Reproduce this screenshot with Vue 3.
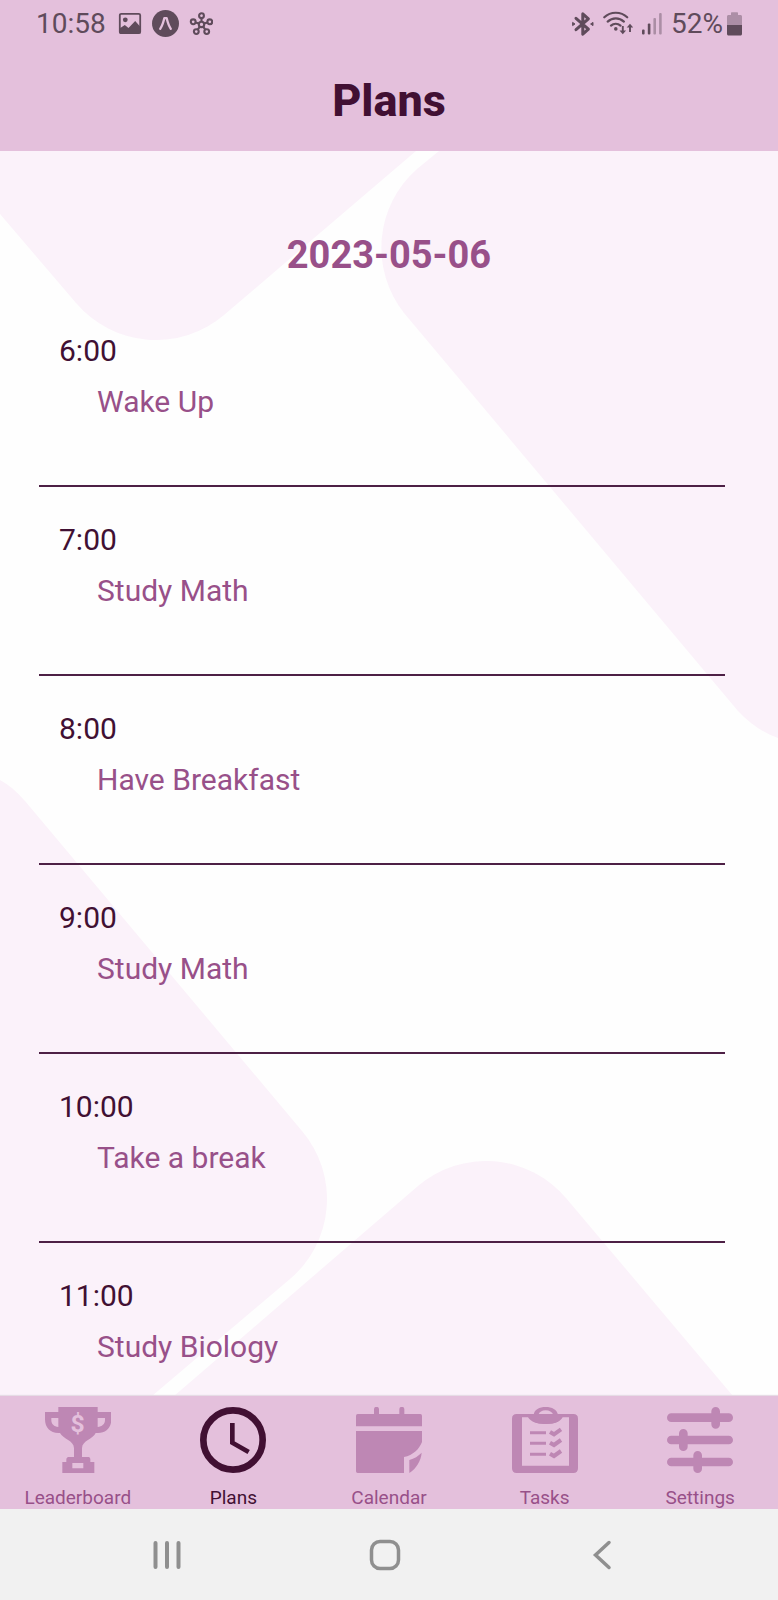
<script setup>
import { ref } from 'vue'

const plans = [
  { time: '6:00', title: 'Wake Up' },
  { time: '7:00', title: 'Study Math' },
  { time: '8:00', title: 'Have Breakfast' },
  { time: '9:00', title: 'Study Math' },
  { time: '10:00', title: 'Take a break' },
  { time: '11:00', title: 'Study Biology' },
]

const tabs = ['Leaderboard', 'Plans', 'Calendar', 'Tasks', 'Settings']
const active = ref('Plans')
</script>

<template>
  <div class="screen">
    <header class="top">
      <div class="status">
        <div class="status-side">
          <span class="clock">10:58</span>
          <svg width="24" height="24" viewBox="0 0 24 24" aria-hidden="true">
            <rect x="1.8" y="1.8" width="20.4" height="19.4" rx="1.5" fill="none" stroke="currentColor" stroke-width="1.8" />
            <circle cx="7.3" cy="7.8" r="2.4" fill="currentColor" />
            <path d="M1.5 16.5l5.3-3.5 3.7 3L17.2 9l5.3 6v6.5h-21z" fill="currentColor" />
          </svg>
          <svg width="27" height="27" viewBox="0 0 27 27" aria-hidden="true">
            <circle cx="13.5" cy="13.5" r="13.5" fill="currentColor" />
            <path d="M8.2 18.8C10.4 15.6 11.3 12.4 12.3 8.2h2.4c1 4.2 1.9 7.4 4.1 10.6" fill="none" stroke="#e4c0dc" stroke-width="2.3" stroke-linecap="round" stroke-linejoin="round" />
          </svg>
          <svg width="24" height="24" viewBox="0 0 24 24" fill="none" stroke="currentColor" stroke-width="2.1" aria-hidden="true">
            <circle cx="12.5" cy="12.4" r="2.7" />
            <circle cx="12.5" cy="3.7" r="2.4" />
            <circle cx="4.2" cy="9.8" r="2.4" />
            <circle cx="20.8" cy="9.8" r="2.4" />
            <circle cx="7.3" cy="19.6" r="2.4" />
            <circle cx="17.7" cy="19.6" r="2.4" />
            <path d="M12.5 6v3.7M6.5 10.5l3.4 1.1M18.5 10.5l-3.4 1.1M8.7 17.6l2.2-3M16.3 17.6l-2.2-3" />
          </svg>
        </div>
        <div class="status-side right">
          <svg width="22" height="26" viewBox="0 0 22 26" fill="none" stroke="currentColor" aria-hidden="true">
            <path d="M4 7.3l12.400 10.9-5.600 5V2.8l5.600 5L4 18.7" stroke-width="3" stroke-linejoin="round" stroke-linecap="round" />
            <path d="M.6 11.4l2.400 1.600-2.400 1.600zM21 11.4L18.6 13l2.400 1.600z" stroke-width="1" fill="currentColor" />
          </svg>
          <svg width="30" height="26" viewBox="0 0 30 26" fill="none" stroke="currentColor" aria-hidden="true">
            <path d="M1.300 6.300C7.500.2 18 .2 24.200 6.300M4.700 10.600c4.600-4.300 11.600-4.300 16.200 0M8 14.600c2.700-2.500 6.800-2.500 9.500 0" stroke-width="2.200" stroke-linecap="round" />
            <circle cx="12.8" cy="17.9" r="1.8" fill="currentColor" stroke="none" />
            <path d="M19.800 15v6M27 21v-6" stroke-width="1.900" />
            <path d="M16.500 19.500h6.600l-3.300 3.800zM23.700 16.500h6.600L27 12.700z" fill="currentColor" stroke="none" />
          </svg>
          <svg width="20" height="26" viewBox="0 0 20 26" fill="currentColor" aria-hidden="true">
            <rect x="0" y="18.5" width="2.6" height="5" rx="1" />
            <rect x="5.8" y="12.6" width="2.6" height="10.9" rx="1" />
            <g opacity=".42">
              <rect x="11.4" y="7" width="2.6" height="16.5" rx="1" />
              <rect x="17.1" y="2" width="2.6" height="21.5" rx="1" />
            </g>
          </svg>
          <span class="battery">
            <span>52%</span>
            <svg width="15" height="26" viewBox="0 0 15 26" fill="currentColor" aria-hidden="true">
              <path d="M4 4V2.200c0-.6.4-1 1-1h5c.6 0 1 .4 1 1V4h2.500c.8 0 1.500.7 1.500 1.500V14H0V5.500C0 4.700.7 4 1.500 4z" opacity=".42" />
              <path d="M0 14h15v9c0 .8-.7 1.500-1.500 1.500h-12C.7 24.500 0 23.800 0 23z" />
            </svg>
          </span>
        </div>
      </div>
      <h1>Plans</h1>
    </header>

    <main class="content">
      <svg class="backdrop" viewBox="0 151 778 1245" preserveAspectRatio="none" aria-hidden="true">
        <g fill="#fbf2fa">
          <path d="M0 151V214L76 303A105 105 0 0 0 224 315L416 151z" />
          <path d="M439 151L417 169A105 105 0 0 0 404 313L738 711Q757 731 778 738V151z" />
          <path d="M0 780Q13 787 25 801L302 1131A105 105 0 0 1 290 1279L152 1396H0z" />
          <path d="M174 1396L418 1186A105 105 0 0 1 566 1198L733 1396z" />
        </g>
      </svg>
      <h2>2023-05-06</h2>
      <ul class="plans">
        <li v-for="plan in plans" :key="plan.time">
          <time>{{ plan.time }}</time>
          <p>{{ plan.title }}</p>
        </li>
      </ul>
    </main>

    <nav class="tabs" aria-label="Main">
      <button v-for="tab in tabs" :key="tab" type="button" :class="{ active: tab === active }" @click="active = tab">
        <svg width="66" height="66" viewBox="0 0 198 198" fill="currentColor" aria-hidden="true">
          <template v-if="tab === 'Leaderboard'">
            <path fill-rule="evenodd" d="M40 0h118v15h41v22c0 25-16 41-40 41h-7c-7 18-41 22-41 46v26h20c3 0 5 3 5 7v8h12v33H52v-33h12v-8c0-4 3-7 6-7h17v-26c0-24-33-28-42-46h-5C16 78 0 62 0 37V15h40zM19 33v6c0 12 8 20 21 21V33zM158 33v27c13-1 22-9 22-21v-6zM82 168v16h33v-16z" />
            <text class="coin" x="98" y="74" text-anchor="middle">$</text>
          </template>
          <g v-else-if="tab === 'Plans'" fill="none" stroke="currentColor">
            <circle cx="99" cy="99" r="89" stroke-width="20" />
            <path d="M97 48v59l49 28" stroke-width="14" />
          </g>
          <template v-else-if="tab === 'Calendar'">
            <path d="M54 24V7a7 7 0 0 1 15 0v17zM130 24V7a7 7 0 0 1 15 0v17z" />
            <path d="M5 21h188q5 0 5 5v32H0V26q0-5 5-5z" />
            <path d="M0 72h198v33c-8 21-27 40-54 45v48H5q-5 0-5-5z" />
            <path d="M197 137c-2 24-16 48-37 61v-39c15-4 27-12 37-22z" />
          </template>
          <template v-else-if="tab === 'Tasks'">
            <path fill-rule="evenodd" d="M14 21h170q14 0 14 14v149q0 14-14 14H14q-14 0-14-14V35q0-14 14-14zM30 31v145h141V31h-19c-7 13-22 20-51 20S56 44 48 31z" />
            <path fill-rule="evenodd" d="M65 23C67 8 82 0 101 0s34 8 37 23zM79 23h45c-4-8-12-13-23-13s-19 5-22 13z" />
            <path d="M49 21h105c-7 21-23 30-53 30S56 42 49 21z" />
            <path d="M54 77h48M54 109h48M54 142h48" stroke="currentColor" stroke-width="9" />
            <path d="M114 75l12 7 21-15M114 107l12 7 21-15M114 140l12 7 21-15" fill="none" stroke="currentColor" stroke-width="12" />
          </template>
          <g v-else stroke="currentColor" stroke-width="26" stroke-linecap="round">
            <path d="M13 32h172M13 99h172M13 165h172M146 13v39M49 79v40M92 145v40" />
          </g>
        </svg>
        <span>{{ tab }}</span>
      </button>
    </nav>

    <div class="system">
      <button type="button" aria-label="Recent apps">
        <svg width="32" height="32" viewBox="0 0 32 32" fill="none" stroke="currentColor" stroke-width="4" stroke-linecap="round">
          <path d="M4.500 4v24M16 4v24M27.500 4v24" />
        </svg>
      </button>
      <button type="button" aria-label="Home">
        <svg width="32" height="32" viewBox="0 0 32 32" fill="none" stroke="currentColor" stroke-width="3.500">
          <rect x="2.500" y="2.500" width="27" height="27" rx="8.500" />
        </svg>
      </button>
      <button type="button" aria-label="Back">
        <svg width="32" height="32" viewBox="0 0 32 32" fill="none" stroke="currentColor" stroke-width="3.500" stroke-linecap="round">
          <path d="M22 3.500L8.500 16 22 28.500" />
        </svg>
      </button>
    </div>
  </div>
</template>

<style>
body {
  margin: 0;
}
</style>

<style scoped>
.screen {
  display: flex;
  flex-direction: column;
  min-height: 100vh;
  background: #fefefe;
  color: #411033;
  font-family: Roboto, "Liberation Sans", sans-serif;
}

h1,
h2,
p,
ul {
  margin: 0;
  padding: 0;
}

button {
  padding: 0;
  border: 0;
  background: none;
  color: inherit;
  font: inherit;
}

.top {
  padding-bottom: 23px;
  background: #e4c0dc;
}

.status {
  display: flex;
  justify-content: space-between;
  height: 47px;
  padding: 0 36px;
  color: #5f4b5b;
  font-size: 28px;
  line-height: 34px;
}

.status-side {
  display: flex;
  align-items: center;
  gap: 10px;
}

.status-side.right {
  gap: 9px;
}

.clock {
  margin-right: 2px;
}

.battery {
  display: flex;
  align-items: center;
  gap: 4px;
}

h1 {
  margin-top: 27px;
  font-size: 45px;
  line-height: 54px;
  font-weight: 800;
  text-align: center;
}

.content {
  position: relative;
  flex: 1;
  padding: 81px 53px 31px 39px;
}

.backdrop {
  position: absolute;
  inset: 0;
  width: 100%;
  height: 100%;
}

h2 {
  position: relative;
  margin: 0 -53px 20px -39px;
  color: #985089;
  font-size: 38px;
  line-height: 46px;
  font-weight: 700;
  text-align: center;
}

.plans {
  position: relative;
  list-style: none;
}

li {
  display: flex;
  flex-direction: column;
  gap: 15px;
  padding: 35px 20px 65px;
  border-bottom: 2px solid #4d2045;
  font-size: 30px;
  line-height: 36px;
}

li:last-child {
  padding-bottom: 0;
  border-bottom: 0;
}

li p {
  padding-left: 38px;
  color: #985089;
}

.tabs {
  position: relative;
  display: grid;
  grid-template-columns: repeat(5, 1fr);
  padding-top: 11px;
  background: #e4c0dc;
  box-shadow: 0 -1px 1px #e6dce5;
  color: #be87b4;
}

.tabs button {
  display: flex;
  flex-direction: column;
  align-items: center;
  gap: 14px;
}

.tabs span {
  color: #985089;
  font-size: 19px;
  line-height: 22px;
}

.tabs .active,
.tabs .active span {
  color: #411033;
}

.coin {
  fill: #e4c0dc;
  font-size: 74px;
  font-weight: 700;
}

.system {
  display: flex;
  height: 91px;
  padding: 0 66px 0 58px;
  background: #f1f1f1;
  color: #8f8f8f;
}

.system button {
  display: flex;
  flex: 1;
  align-items: center;
  justify-content: center;
}
</style>
